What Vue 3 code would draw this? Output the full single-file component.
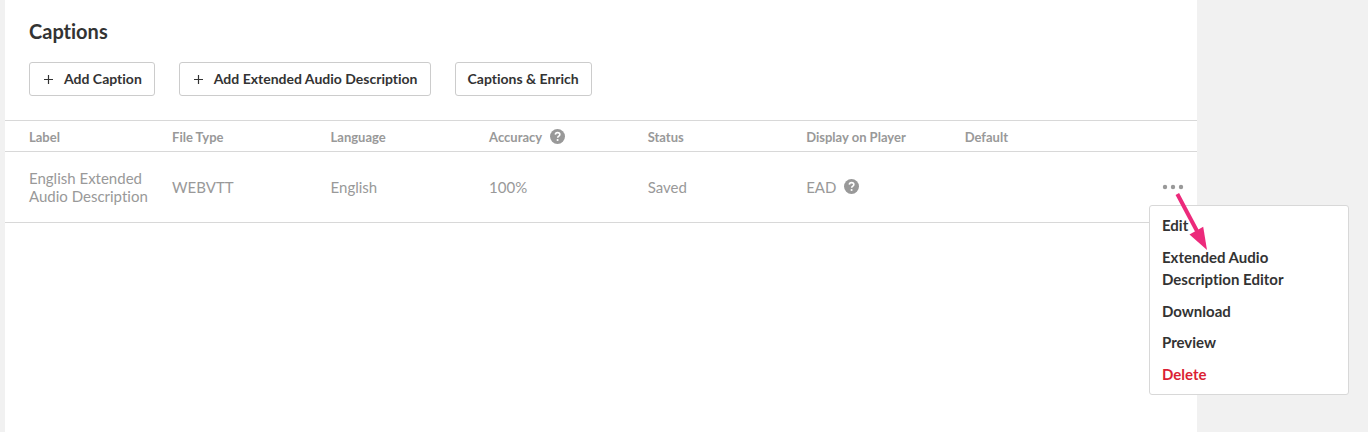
<script setup>
import { ref } from 'vue'

const columns = [
  { key: 'label', title: 'Label' },
  { key: 'fileType', title: 'File Type' },
  { key: 'language', title: 'Language' },
  { key: 'accuracy', title: 'Accuracy', help: true },
  { key: 'status', title: 'Status' },
  { key: 'display', title: 'Display on Player' },
  { key: 'isDefault', title: 'Default' },
]

const captions = [
  {
    label: 'English Extended Audio Description',
    fileType: 'WEBVTT',
    language: 'English',
    accuracy: '100%',
    status: 'Saved',
    display: 'EAD',
    isDefault: '',
  },
]

const toolbar = [
  { text: 'Add Caption', plus: true },
  { text: 'Add Extended Audio Description', plus: true },
  { text: 'Captions & Enrich', plus: false },
]

const actions = ['Edit', 'Extended Audio Description Editor', 'Download', 'Preview', 'Delete']
const menuOpen = ref(true)
</script>

<template>
  <main class="panel">
    <h1 class="title">Captions</h1>

    <div class="toolbar">
      <button v-for="item in toolbar" :key="item.text" type="button" class="btn">
        <svg v-if="item.plus" class="plus" viewBox="0 0 9 9" aria-hidden="true">
          <path d="M4.5 0v9M0 4.5h9" stroke="currentColor" stroke-width="1.2" />
        </svg>
        {{ item.text }}
      </button>
    </div>

    <table class="captions">
      <thead>
        <tr>
          <th v-for="col in columns" :key="col.key" :class="col.key" scope="col">
            <span class="cell">
              {{ col.title }}
              <svg v-if="col.help" class="help" viewBox="0 0 16 16" role="img" aria-label="Help">
                <circle cx="8" cy="8" r="8" fill="currentColor" />
                <path d="M5.7 6C5.8 4.6 6.8 3.9 8.1 3.9c1.4 0 2.4.8 2.4 2 0 1.7-2.3 1.7-2.3 3.5" fill="none" stroke="#fff" stroke-width="1.7" />
                <circle cx="8.1" cy="11.8" r="1.1" fill="#fff" />
              </svg>
            </span>
          </th>
          <td class="actions"></td>
        </tr>
      </thead>
      <tbody>
        <tr v-for="row in captions" :key="row.label">
          <td v-for="col in columns" :key="col.key">
            <span class="cell">
              {{ row[col.key] }}
              <svg v-if="col.key === 'display'" class="help" viewBox="0 0 16 16" role="img" aria-label="Help">
                <circle cx="8" cy="8" r="8" fill="currentColor" />
                <path d="M5.7 6C5.8 4.6 6.8 3.9 8.1 3.9c1.4 0 2.4.8 2.4 2 0 1.7-2.3 1.7-2.3 3.5" fill="none" stroke="#fff" stroke-width="1.7" />
                <circle cx="8.1" cy="11.8" r="1.1" fill="#fff" />
              </svg>
            </span>
          </td>
          <td class="actions">
            <div class="anchor">
              <button type="button" class="more" aria-label="More actions" :aria-expanded="menuOpen" @click="menuOpen = !menuOpen">
                <svg viewBox="0 0 22 6" aria-hidden="true">
                  <circle cx="3" cy="3" r="2.2" />
                  <circle cx="11" cy="3" r="2.2" />
                  <circle cx="19" cy="3" r="2.2" />
                </svg>
              </button>
              <div v-if="menuOpen" class="menu">
                <button v-for="action in actions" :key="action" type="button" :class="{ danger: action === 'Delete' }">
                  {{ action }}
                </button>
              </div>
              <svg v-if="menuOpen" class="arrow" viewBox="0 0 34 58" aria-hidden="true">
                <path d="M2.3 2L22 39" stroke="#ec2a7b" stroke-width="4" />
                <path d="M14.5 42.5L28.2 34.8L32 58Z" fill="#ec2a7b" />
              </svg>
            </div>
          </td>
        </tr>
      </tbody>
    </table>
  </main>
</template>

<style>
body {
  background: #f1f1f1;
}
</style>

<style scoped>
.panel {
  box-sizing: border-box;
  min-height: 100vh;
  margin-left: 5px;
  margin-right: 12.5%;
  padding-top: 16px;
  background: #fff;
  color: #333;
  font-family: Lato, "Liberation Sans", sans-serif;
  font-size: 15px;
  font-variant-ligatures: none;
}

.title {
  margin: 0 0 16px 24px;
  font-size: 20px;
  font-weight: 700;
  line-height: 30px;
}

.toolbar {
  display: flex;
  gap: 24px;
  margin: 0 24px 24px;
}

button {
  font: inherit;
  font-variant-ligatures: none;
  color: inherit;
  cursor: pointer;
}

.btn {
  box-sizing: border-box;
  display: flex;
  align-items: center;
  gap: 11px;
  padding: 0 12px 2px;
  height: 34px;
  border: 1px solid #ccc;
  border-radius: 3px;
  background: #fff;
  font-size: 14px;
  font-weight: 700;
}

.plus {
  width: 9px;
  height: 9px;
  margin: 2px 0 0 2px;
}

.captions {
  width: 100%;
  table-layout: fixed;
  border-collapse: separate;
  border-spacing: 0;
  border-top: 1px solid #d8d8d8;
  color: #999;
}

th,
td {
  box-sizing: border-box;
  width: 13.3%;
  padding: 0 0 0 24px;
  border-bottom: 1px solid #d8d8d8;
  text-align: left;
  vertical-align: middle;
}

th {
  height: 31px;
  padding-top: 1px;
  font-size: 13px;
  font-weight: 700;
}

th.label {
  width: 12%;
}

tbody td {
  height: 71px;
  line-height: 18px;
}

td.actions {
  width: auto;
  padding: 0 12px 0 0;
}

.cell {
  display: flex;
  align-items: center;
  gap: 8px;
}

.help {
  flex: none;
  width: 15px;
  height: 15px;
  margin-bottom: 1px;
}

.anchor {
  position: relative;
  display: flex;
  justify-content: flex-end;
}

.more {
  display: flex;
  align-items: center;
  padding: 0 1px;
  height: 18px;
  border: 0;
  background: none;
}

.more svg {
  width: 22px;
  height: 6px;
  fill: #999;
}

.menu {
  position: absolute;
  top: 27px;
  right: -164px;
  z-index: 1;
  box-sizing: border-box;
  display: flex;
  flex-direction: column;
  gap: 1px;
  width: 200px;
  padding: 4px 0 5px;
  border: 1px solid #d8d8d8;
  border-radius: 3px;
  background: #fff;
}

.menu button {
  padding: 4px 48px 4px 12px;
  border: 0;
  background: none;
  color: #333;
  font-weight: 700;
  line-height: 1.5;
  text-align: left;
}

.menu .danger {
  color: #db1f35;
}

.arrow {
  position: absolute;
  top: 14px;
  right: -24px;
  z-index: 2;
  width: 34px;
  height: 58px;
  pointer-events: none;
}
</style>
